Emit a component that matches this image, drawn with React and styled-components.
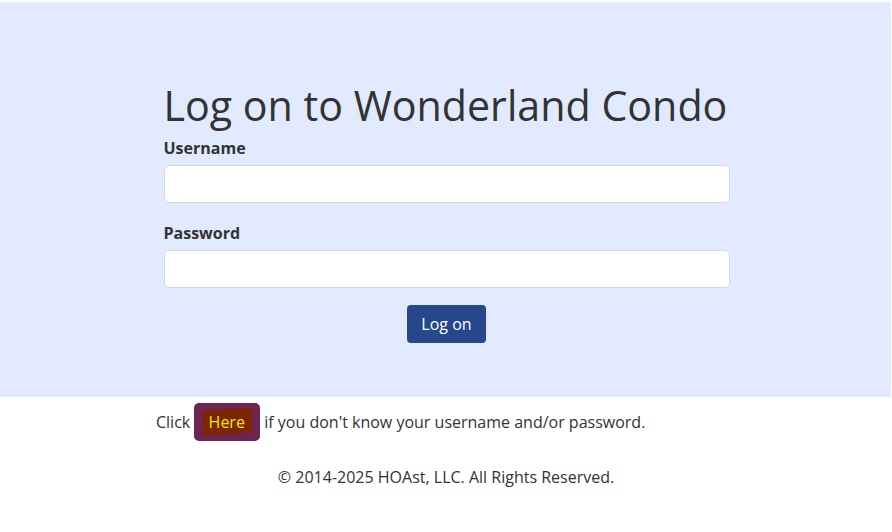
import React from "react";
import styled, { createGlobalStyle } from "styled-components";

const Global = createGlobalStyle`
  html, body { margin: 0; padding: 0; background: #fff; }
  body { font-family: "Open Sans", "Noto Sans", sans-serif; color: #333; font-size: 16px; }
  * { box-sizing: border-box; }
`;

const Page = styled.div`
  padding-top: 2px;
`;

const Panel = styled.section`
  background: #e1eafe;
  margin-right: 1px;
  height: 395px;
  padding: 76px 0 0 2px;
  display: flex;
  justify-content: center;
`;

const Form = styled.form`
  width: 566px;
  display: flex;
  flex-direction: column;
`;

const Title = styled.h1`
  margin: 0;
  font-weight: 400;
  font-size: 41.2px;
  line-height: 54px;
  white-space: nowrap;
  color: #333;
`;

const Label = styled.label`
  display: block;
  font-weight: 700;
  font-size: 16px;
  line-height: 24px;
  margin: ${p => p.$first ? "4px" : "18px"} 0 5px 0;
  color: #333;
`;

const Input = styled.input`
  display: block;
  width: 100%;
  height: 38px;
  border: 1px solid #d3d8de;
  border-radius: 5px;
  background: #fff;
  font: inherit;
  padding: 6px 12px;
`;

const Actions = styled.div`
  display: flex;
  justify-content: center;
  margin-top: 17px;
`;

const Button = styled.button`
  height: 38px;
  padding: 0 14px;
  border: none;
  border-radius: 4px;
  background: #27478c;
  color: #fff;
  font-family: inherit;
  font-size: 16px;
`;

const HelpLine = styled.p`
  margin: 6px 0 0;
  padding-left: 156px;
  display: flex;
  align-items: center;
  gap: 4px;
  font-size: 16px;
  line-height: 24px;
  color: #333;
`;

const HereButton = styled.a`
  display: inline-flex;
  align-items: center;
  justify-content: center;
  width: 66px;
  height: 38px;
  border-radius: 5px;
  background: #6f2350;
  text-decoration: none;
`;

const Highlight = styled.span`
  display: inline-block;
  padding: 2px 7px 2px 6px;
  line-height: 24px;
  background: #7a2700;
  color: #f6e600;
  clip-path: polygon(0 12%, 45% 6%, 100% 0, 100% 86%, 55% 92%, 0 100%);
`;

const Footer = styled.footer`
  text-align: center;
  margin-top: 24px;
  font-size: 16px;
  line-height: 24px;
  color: #333;
`;

export default function App() {
  return (
    <Page>
      <Global />
      <Panel>
        <Form onSubmit={e => e.preventDefault()}>
          <Title>Log on to Wonderland Condo</Title>
          <Label $first htmlFor="u">Username</Label>
          <Input id="u" type="text" />
          <Label htmlFor="p">Password</Label>
          <Input id="p" type="password" />
          <Actions>
            <Button type="submit">Log on</Button>
          </Actions>
        </Form>
      </Panel>
      <HelpLine>
        Click <HereButton href="#"><Highlight>Here</Highlight></HereButton> if you don't know your username and/or password.
      </HelpLine>
      <Footer>© 2014-2025 HOAst, LLC. All Rights Reserved.</Footer>
    </Page>
  );
}
